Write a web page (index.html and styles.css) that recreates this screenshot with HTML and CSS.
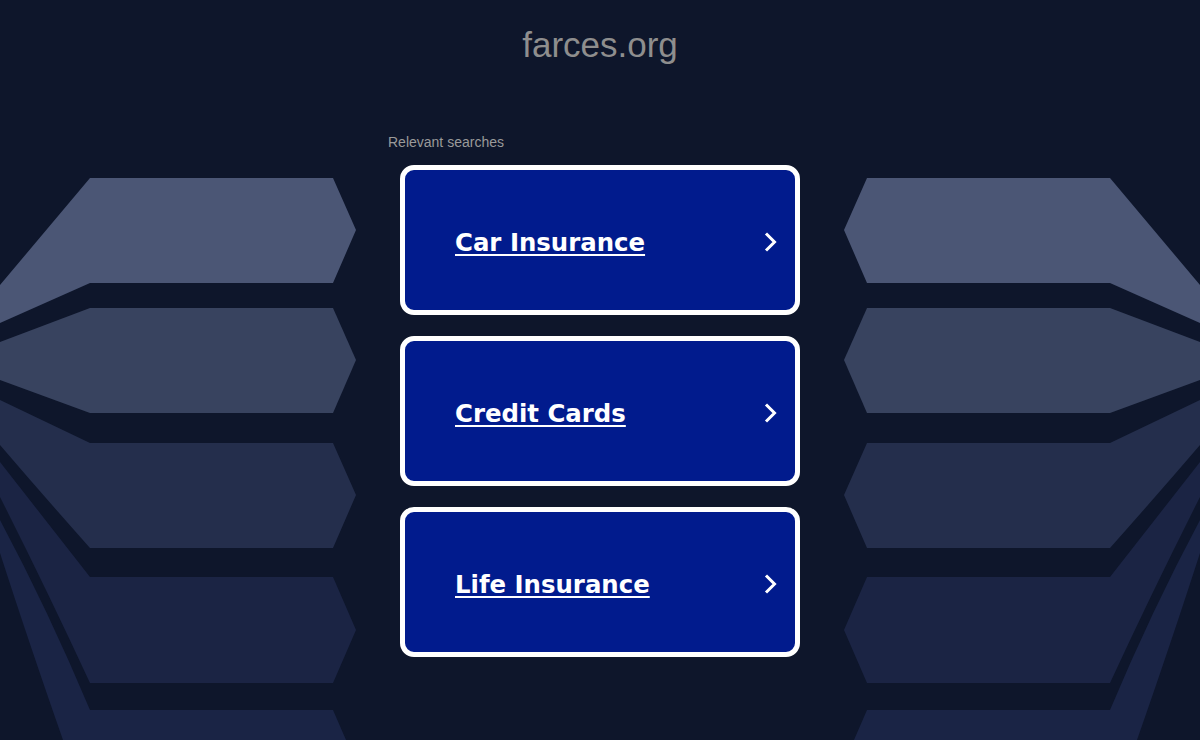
FILE: index.html
```html
<!DOCTYPE html>
<html lang="en">
<head>
    <meta charset="UTF-8">
    <meta name="viewport" content="width=device-width, initial-scale=1.0">
    <title>farces.org</title>
    <link rel="stylesheet" href="styles.css">
</head>

<body>
    <svg class="backdrop" width="1200" height="740" viewBox="0 0 1200 740" aria-hidden="true">
        <g id="fan">
            <path fill="#4b5675" d="M90,178 L333,178 L356,230 L333,283 L90,283 L0,323 L0,285 Z"/>
            <path fill="#38435f" d="M90,308 L333,308 L356,360 L333,413 L90,413 L0,380 L0,342 Z"/>
            <path fill="#242e4c" d="M90,443 L333,443 L356,495 L333,548 L90,548 Q42,494 0,445 L0,400 Z"/>
            <path fill="#1b2444" d="M90,577 L333,577 L356,630 L333,683 L90,683 Q46,588 0,497 L0,462 Z"/>
            <path fill="#1a2445" d="M0,520 Q48,610 90,710 L333,710 L356,763 L333,816 L90,816 L63,740 Q28,640 0,553 Z"/>
        </g>
        <use href="#fan" transform="translate(1200,0) scale(-1,1)"/>
    </svg>

    <div class="page">
        <h1 class="domain">farces.org</h1>

        <div class="searches">
            <p class="searches-title">Relevant searches</p>

            <a class="card" href="#">
                <span class="card-label">Car Insurance</span>
                <svg class="chevron" width="16" height="22" viewBox="0 0 16 22"><polyline points="4,2.5 12.5,11 4,19.5"/></svg>
            </a>
            <a class="card" href="#">
                <span class="card-label">Credit Cards</span>
                <svg class="chevron" width="16" height="22" viewBox="0 0 16 22"><polyline points="4,2.5 12.5,11 4,19.5"/></svg>
            </a>
            <a class="card" href="#">
                <span class="card-label">Life Insurance</span>
                <svg class="chevron" width="16" height="22" viewBox="0 0 16 22"><polyline points="4,2.5 12.5,11 4,19.5"/></svg>
            </a>
        </div>
    </div>
</body>
</html>
```

FILE: styles.css
```css
body {
    margin: 0;
    height: 740px;
    overflow: hidden;
    background-color: #0e162b;
    font-family: "Liberation Sans", Arial, sans-serif;
    position: relative;
}

.backdrop {
    position: absolute;
    top: 0;
    left: 0;
    z-index: 0;
}

.page {
    position: relative;
    z-index: 1;
    display: flex;
    flex-direction: column;
    align-items: center;
    padding-top: 25px;
}

.domain {
    margin: 0;
    font-size: 35px;
    line-height: 40px;
    font-weight: normal;
    color: #8e8e8e;
}

.searches {
    width: 424px;
    margin-top: 69px;
    display: flex;
    flex-direction: column;
    gap: 21px;
}

.searches-title {
    margin: 0 0 -6px 0;
    font-size: 14px;
    line-height: 16px;
    color: #9a9a9a;
}

.card {
    margin: 0 12px;
    height: 136px;
    display: flex;
    align-items: center;
    justify-content: space-between;
    padding: 4px 17px 0 50px;
    background-color: #011b8d;
    border: 5px solid #fff;
    border-radius: 14px;
    color: #fff;
    text-decoration: none;
}

.card-label {
    font-family: "DejaVu Sans", Verdana, sans-serif;
    font-weight: bold;
    font-size: 24.4px;
    text-decoration: underline;
    text-underline-offset: 3px;
}

.chevron polyline {
    fill: none;
    stroke: #fff;
    stroke-width: 3;
}
```
